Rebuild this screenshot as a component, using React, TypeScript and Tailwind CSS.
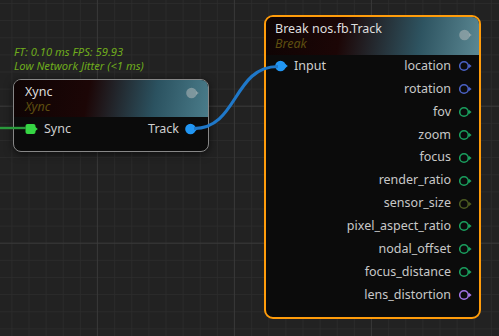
import React from "react";

// Node-graph canvas: two nodes joined by a wire, over a grid.

type Out = { name: string; color: string };

const outputs: Out[] = [
  { name: "location", color: "#4a61c4" },
  { name: "rotation", color: "#4a61c4" },
  { name: "fov", color: "#1a9f5e" },
  { name: "zoom", color: "#1a9f5e" },
  { name: "focus", color: "#1a9f5e" },
  { name: "render_ratio", color: "#1a9f5e" },
  { name: "sensor_size", color: "#4b5a21" },
  { name: "pixel_aspect_ratio", color: "#1a9f5e" },
  { name: "nodal_offset", color: "#1a9f5e" },
  { name: "focus_distance", color: "#1a9f5e" },
  { name: "lens_distortion", color: "#a274e4" },
];

const font = { fontFamily: '"Noto Sans", "Open Sans", sans-serif' };

function HollowPin({ color }: { color: string }) {
  return (
    <svg width="14" height="12" viewBox="0 0 14 12" className="shrink-0">
      <circle cx="5" cy="6" r="4.3" fill="none" stroke={color} strokeWidth="1.6" />
      <path d="M9.8 3.8 L12.6 6 L9.8 8.2 Z" fill={color} />
    </svg>
  );
}

function DotPin({ color }: { color: string }) {
  return (
    <svg width="14" height="12" viewBox="0 0 14 12" className="shrink-0">
      <circle cx="5.5" cy="6" r="5.3" fill={color} />
      <path d="M10 3.8 L12.8 6 L10 8.2 Z" fill={color} />
    </svg>
  );
}

function SquarePin({ color }: { color: string }) {
  return (
    <svg width="14" height="12" viewBox="0 0 14 12" className="shrink-0">
      <rect x="0.5" y="1" width="10" height="10" rx="2" fill={color} />
      <path d="M10 3.8 L12.8 6 L10 8.2 Z" fill={color} />
    </svg>
  );
}

function HeaderDot() {
  return (
    <svg width="14" height="12" viewBox="0 0 14 12" className="shrink-0">
      <circle cx="5.5" cy="6" r="5.3" fill="#a9b2b4" fillOpacity="0.6" />
      <path d="M10 4 L12.8 6 L10 8 Z" fill="#a9b2b4" fillOpacity="0.6" />
    </svg>
  );
}

function Grid() {
  return (
    <svg className="absolute inset-0" width="499" height="336">
      <defs>
        <pattern id="minor" x="11.4" y="3" width="17.125" height="17.125" patternUnits="userSpaceOnUse">
          <path d="M0 0 H17.125 M0 0 V17.125" stroke="#2d2d2d" strokeWidth="1.2" fill="none" />
        </pattern>
        <pattern id="major" x="96.9" y="105.7" width="137" height="137" patternUnits="userSpaceOnUse">
          <path d="M0 0 H137 M0 0 V137" stroke="#3d3d3d" strokeWidth="1.4" fill="none" />
        </pattern>
      </defs>
      <rect width="499" height="336" fill="#222222" />
      <rect width="499" height="336" fill="url(#minor)" />
      <rect width="499" height="336" fill="url(#major)" />
    </svg>
  );
}

function Wires() {
  return (
    <svg className="absolute inset-0 pointer-events-none" width="499" height="336">
      <path d="M0 128 H26" stroke="#2a9a3c" strokeWidth="2.4" fill="none" />
      <path d="M194 128.5 C238 128.5 233 66.5 278 66.5" stroke="#1f78c9" strokeWidth="3.2" fill="none" />
    </svg>
  );
}

export default function App() {
  return (
    <div className="relative w-[499px] h-[336px] overflow-hidden bg-[#222222]" style={font}>
      <Grid />

      <div className="absolute left-[14px] top-[45px] text-[11.2px] leading-[14px] italic text-[#6fac1c]">
        <div>FT: 0.10 ms FPS: 59.93</div>
        <div>Low Network Jitter (&lt;1 ms)</div>
      </div>

      {/* Xync node */}
      <div className="absolute left-[13px] top-[79px] w-[196px] h-[73px] rounded-[8px] border border-[#878787] overflow-hidden bg-[#0b0b0b] shadow-[0_2px_8px_rgba(0,0,0,0.6)]">
        <div className="h-[37px] flex items-start justify-between pl-[11px] pr-[8px] pt-[4px] bg-[linear-gradient(100deg,#0e0404_0%,#1c0606_38%,#2b5260_72%,#4a7c8a_100%)]">
          <div className="flex flex-col">
            <div className="text-[12.5px] leading-[15px] text-[#dedede]">Xync</div>
            <div className="text-[12.5px] leading-[15px] italic text-[#5e4e10]">Xync</div>
          </div>
          <div className="pt-[3px]">
            <HeaderDot />
          </div>
        </div>
        <div className="h-[24px] flex items-center justify-between pl-[11px] pr-[9px]">
          <div className="flex items-center gap-[5px]">
            <SquarePin color="#36d644" />
            <span className="text-[12.5px] text-[#cfcfcf]">Sync</span>
          </div>
          <div className="flex items-center gap-[6px]">
            <span className="text-[12.5px] text-[#cfcfcf]">Track</span>
            <DotPin color="#2196f3" />
          </div>
        </div>
      </div>

      {/* Break node */}
      <div className="absolute left-[264px] top-[15px] w-[217px] h-[304px] rounded-[9px] border-2 border-[#ff9c0b] overflow-hidden bg-[#0b0b0b]">
        <div className="h-[38px] flex items-start justify-between pl-[9px] pr-[6px] pt-[4px] bg-[linear-gradient(100deg,#0e0404_0%,#1c0606_35%,#2e5461_72%,#5b8893_100%)]">
          <div className="flex flex-col">
            <div className="text-[12.5px] leading-[15px] text-[#dedede]">Break nos.fb.Track</div>
            <div className="text-[12.5px] leading-[15px] italic text-[#5e4e10]">Break</div>
          </div>
          <div className="pt-[8px]">
            <HeaderDot />
          </div>
        </div>
        <div className="flex flex-col">
          {outputs.map((o, i) => (
            <div key={o.name} className="h-[22.87px] flex items-center justify-between pl-[9px] pr-[6px]">
              {i === 0 ? (
                <div className="flex items-center gap-[5px]">
                  <DotPin color="#2196f3" />
                  <span className="text-[12.5px] text-[#cfcfcf]">Input</span>
                </div>
              ) : (
                <div />
              )}
              <div className="flex items-center gap-[8px]">
                <span className="text-[12.5px] text-[#c8c8c8]">{o.name}</span>
                <HollowPin color={o.color} />
              </div>
            </div>
          ))}
        </div>
      </div>

      <Wires />
    </div>
  );
}
